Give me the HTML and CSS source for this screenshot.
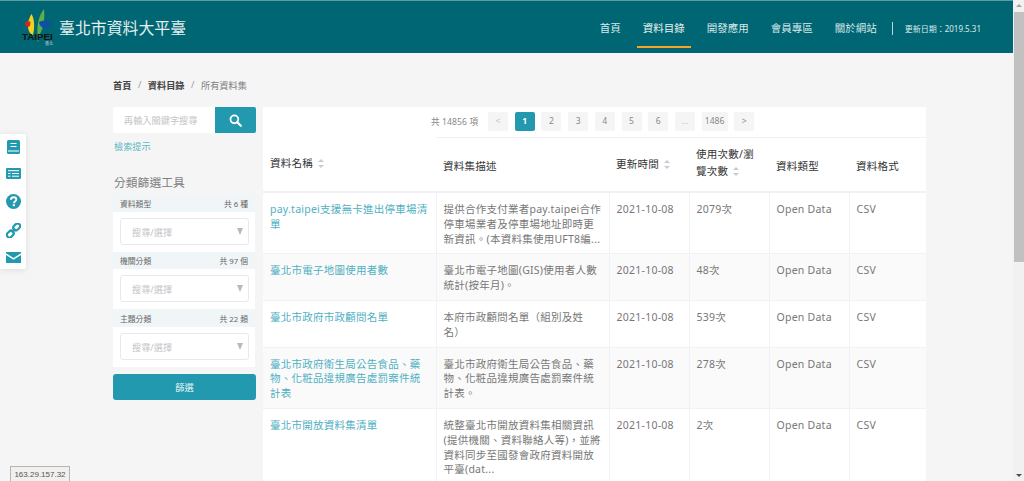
FILE: index.html
```html
<!DOCTYPE html>
<html lang="zh-Hant">
<head>
<meta charset="utf-8">
<title>臺北市資料大平臺</title>
<link rel="stylesheet" href="styles.css">
</head>
<body>
<div class="viewport">
  <div class="page">
    <header class="topbar">
      <div class="brand">
        <div class="logo">
          <svg class="logo-art" viewBox="0 0 34 40" width="34" height="40">
            <path d="M11.5 7 C14.5 12 15 20 13 28 C9.5 27 7.5 22 8 17 C8.3 13 10 9.5 11.5 7Z" fill="#f2d21a"/>
            <path d="M24 2 C25 10 24 20 20 27 C19 30 18.6 33 18 36 C17.6 33 17.6 29 17.4 25 C17 15 20 7 24 2Z" fill="#5bb04a"/>
            <path d="M5 16 C5.5 14 7 13.5 8 15 L10 14 C11 17 10 20 8 20 C6 20 4.8 18 5 16Z" fill="#d5232a"/>
            <path d="M19 15 C23 13 29 13.5 31 16 C31.5 19 28 21.5 24 21 C21.5 20.8 19.5 18.5 19 15Z" fill="#0f4fa8"/>
          </svg>
          <span class="logo-word">TAIPEI</span>
          <span class="logo-sub">臺北</span>
        </div>
        <div class="site-name">臺北市資料大平臺</div>
      </div>
      <nav class="nav">
        <a class="nav-item">首頁</a>
        <a class="nav-item active">資料目錄</a>
        <a class="nav-item">開發應用</a>
        <a class="nav-item">會員專區</a>
        <a class="nav-item">關於網站</a>
        <span class="update">更新日期：2019.5.31</span>
      </nav>
    </header>

    <main class="content">
      <div class="crumbs">
        <a class="crumb">首頁</a><span class="sep">/</span><a class="crumb">資料目錄</a><span class="sep">/</span><span class="crumb-now">所有資料集</span>
      </div>
      <div class="columns">
        <aside class="sidebar">
          <div class="search">
            <div class="search-input">再輸入關鍵字搜尋</div>
            <button class="search-btn" type="button" aria-label="搜尋">
              <svg viewBox="0 0 16 16" width="13" height="13"><circle cx="6.6" cy="6.6" r="4.8" fill="none" stroke="#fff" stroke-width="2.2"/><path d="M10.2 10.2 L14.6 14.6" stroke="#fff" stroke-width="2.6" stroke-linecap="round"/></svg>
            </button>
          </div>
          <a class="hint">檢索提示</a>
          <h2 class="filter-title">分類篩選工具</h2>
          <div class="filter-panel">
            <div class="filter-head"><span>資料類型</span><span>共 6 種</span></div>
            <div class="filter-body"><div class="select"><span>搜尋/選擇</span><i class="caret"></i></div></div>
            <div class="filter-head"><span>機關分類</span><span>共 97 個</span></div>
            <div class="filter-body"><div class="select"><span>搜尋/選擇</span><i class="caret"></i></div></div>
            <div class="filter-head"><span>主題分類</span><span>共 22 類</span></div>
            <div class="filter-body"><div class="select"><span>搜尋/選擇</span><i class="caret"></i></div></div>
          </div>
          <button class="filter-btn" type="button">篩選</button>
        </aside>

        <section class="card">
          <div class="pager">
            <span class="pager-total">共 14856 項</span>
            <a class="pg pg-dim">&lt;</a>
            <a class="pg pg-on">1</a>
            <a class="pg">2</a>
            <a class="pg">3</a>
            <a class="pg">4</a>
            <a class="pg">5</a>
            <a class="pg">6</a>
            <a class="pg pg-dim">...</a>
            <a class="pg pg-wide">1486</a>
            <a class="pg">&gt;</a>
          </div>
          <table class="data">
            <colgroup>
              <col class="c1"><col class="c2"><col class="c3"><col class="c4"><col class="c5"><col class="c6">
            </colgroup>
            <thead>
              <tr>
                <th class="raised">資料名稱<i class="sort"></i></th>
                <th>資料集描述</th>
                <th class="raised-sm">更新時間<i class="sort"></i></th>
                <th class="multi">使用次數/瀏覽次數<i class="sort"></i></th>
                <th>資料類型</th>
                <th>資料格式</th>
              </tr>
            </thead>
            <tbody>
              <tr>
                <td><a class="link">pay.taipei支援無卡進出停車場清單</a></td>
                <td>提供合作支付業者pay.taipei合作停車場業者及停車場地址即時更新資訊。(本資料集使用UFT8編...</td>
                <td>2021-10-08</td><td>2079次</td><td>Open Data</td><td>CSV</td>
              </tr>
              <tr>
                <td><a class="link">臺北市電子地圖使用者數</a></td>
                <td>臺北市電子地圖(GIS)使用者人數統計(按年月)。</td>
                <td>2021-10-08</td><td>48次</td><td>Open Data</td><td>CSV</td>
              </tr>
              <tr>
                <td><a class="link">臺北市政府市政顧問名單</a></td>
                <td>本府市政顧問名單（組別及姓名）</td>
                <td>2021-10-08</td><td>539次</td><td>Open Data</td><td>CSV</td>
              </tr>
              <tr>
                <td><a class="link">臺北市政府衛生局公告食品、藥物、化粧品違規廣告處罰案件統計表</a></td>
                <td>臺北市政府衛生局公告食品、藥物、化粧品違規廣告處罰案件統計表。</td>
                <td>2021-10-08</td><td>278次</td><td>Open Data</td><td>CSV</td>
              </tr>
              <tr>
                <td><a class="link">臺北市開放資料集清單</a></td>
                <td>統整臺北市開放資料集相關資訊(提供機關、資料聯絡人等)，並將資料同步至國發會政府資料開放平臺(dat...</td>
                <td>2021-10-08</td><td>2次</td><td>Open Data</td><td>CSV</td>
              </tr>
            </tbody>
          </table>
        </section>
      </div>
    </main>
  </div>

  <div class="scrollbar" aria-hidden="true">
    <div class="scroll-up"></div>
    <div class="scroll-thumb"></div>
    <div class="scroll-track"></div>
    <div class="scroll-down"></div>
  </div>
</div>

<div class="side-tools">
  <svg viewBox="0 0 13 14" width="13" height="14"><rect width="13" height="14" rx="1.6" fill="#2299ae"/><path d="M3.5 3.5 H9.5 M3.5 6.5 H9.5 M1 11 H12" stroke="#fff" stroke-width="1.2"/></svg>
  <svg viewBox="0 0 15 11" width="15" height="11"><rect width="15" height="11" rx="1.2" fill="#2299ae"/><path d="M2 2.7 H13 M6 5.5 H13 M6 8.2 H13 M2 5.5 H4.5 M2 8.2 H4.5" stroke="#fff" stroke-width="1"/></svg>
  <svg viewBox="0 0 16 16" width="15" height="15"><circle cx="8" cy="8" r="8" fill="#2299ae"/><path d="M5.2 6.2 C5.2 4.4 6.5 3.4 8.1 3.4 C9.8 3.4 11 4.4 11 5.9 C11 7.9 8.4 7.9 8.4 9.8" fill="none" stroke="#fff" stroke-width="2"/><rect x="7.2" y="10.9" width="2.3" height="2.1" fill="#fff"/></svg>
  <svg viewBox="0 0 16 16" width="15" height="15"><g fill="none" stroke="#2299ae" stroke-width="2.3"><rect x="7.4" y="1.4" width="8" height="5.6" rx="2.8" transform="rotate(-45 11.4 4.2)"/><rect x="0.6" y="9" width="8" height="5.6" rx="2.8" transform="rotate(-45 4.6 11.8)"/><path d="M6 10 L10 6"/></g></svg>
  <svg viewBox="0 0 15 11" width="15" height="11"><path d="M0 0 H15 V1.2 L7.5 6 L0 1.2Z M0 3 L7.5 7.8 L15 3 V11 H0Z" fill="#2299ae"/></svg>
</div>
<div class="ip-tag">163.29.157.32</div>
</body>
</html>
```

FILE: styles.css
```css
* { box-sizing: border-box; }
html, body { margin: 0; height: 100%; overflow: hidden; }
body {
  background: #f5f5f5;
  font-family: "Noto Sans", "Noto Sans CJK TC", sans-serif;
  font-size: 10.5px;
  color: #777;
}
a { color: inherit; text-decoration: none; }

.viewport { display: flex; height: 481px; }
.page { flex: 1; min-width: 0; overflow: hidden; }

/* scrollbar */
.scrollbar { width: 11px; background: #f1f1f1; flex: none; padding-left: 1px; display: flex; flex-direction: column; }
.scroll-up { height: 12px; position: relative; flex: none; }
.scroll-up::after {
  content: ""; position: absolute; left: 2px; top: 4px;
  border: 3px solid transparent; border-top: 0; border-bottom: 3px solid #a3a3a3;
}
.scroll-thumb { height: 250px; background: #c1c1c1; flex: none; }
.scroll-track { flex: 1; }
.scroll-down { height: 12px; position: relative; flex: none; }
.scroll-down::after {
  content: ""; position: absolute; left: 2px; top: 5px;
  border: 3px solid transparent; border-bottom: 0; border-top: 3px solid #505050;
}

/* header */
.topbar {
  height: 53px;
  background: #006673;
  border-top: 1px solid #5f9aa2;
  display: flex;
  align-items: stretch;
  justify-content: space-between;
  padding: 0 32px 0 20px;
}
.brand { display: flex; align-items: flex-start; gap: 5px; }
.logo { width: 34px; height: 40px; position: relative; margin-top: 6px; }
.logo-art { display: block; }
.logo-word {
  position: absolute; left: 2px; top: 25px;
  font: bold 9.8px/9px "Liberation Sans", sans-serif;
  color: #111;
}
.logo-sub { position: absolute; left: 25px; top: 34px; font-size: 4px; line-height: 5px; color: #bcd; }
.site-name { font-size: 15.9px; line-height: 20px; color: #e4efef; margin-top: 17px; }

.nav { display: flex; align-items: flex-start; }
.nav-item {
  display: flex; align-items: center;
  padding: 8px 6px 0; margin-right: 10px;
  height: 47px;
  border-bottom: 2px solid transparent;
  font-size: 10.5px; color: #d8e8e9;
}
.nav-item.active { color: #e9f2f2; border-bottom-color: #f5a623; }
.update {
  display: flex; align-items: center;
  height: 13px; margin: 21px 0 0 -1px; padding-left: 12px;
  border-left: 1px solid #b9d5d8;
  font-size: 8px; color: #dcebec;
}

/* content */
.content { padding: 0 87px 0 113px; }
.crumbs { display: flex; align-items: center; height: 54px; padding-top: 9px; font-size: 9.2px; }
.crumb { color: #444; font-weight: 700; }
.crumb-now { color: #808080; }
.sep { margin: 0 6.5px; color: #999; }

.columns { display: flex; gap: 7px; align-items: flex-start; }
.sidebar { width: 143px; flex: none; }

.search { display: flex; height: 26px; border-radius: 2px; overflow: hidden; background: #fff; }
.search-input { flex: 1; padding-left: 11px; line-height: 27px; font-size: 9.2px; color: #c4c4c4; }
.search-btn {
  width: 41px; border: 0; padding: 0; background: #2299ae;
  display: flex; align-items: center; justify-content: center;
}
.hint { display: block; margin: 7px 0 0 1px; font-size: 9.2px; line-height: 14px; color: #5cb6c6; }
.filter-title { margin: 19px 0 0 1px; font-weight: 400; font-size: 11.8px; line-height: 18px; color: #808080; }

.filter-panel { width: 142px; margin-top: 4px; background: #fff; }
.filter-head {
  display: flex; justify-content: space-between; align-items: center;
  height: 17px; padding: 0 7px;
  background: #f0f6f8; font-size: 7.8px; color: #666;
}
.filter-head:nth-child(5) { height: 18px; }
.filter-body { padding: 6px 6px 7px 7px; }
.select {
  height: 27px; border: 1px solid #e8e8ee; border-radius: 3px; background: #fff;
  display: flex; align-items: center; justify-content: space-between;
  padding: 0 5px 0 11px; font-size: 9.2px; color: #c4c4c8;
}
.caret { width: 0; height: 0; border: 3.5px solid transparent; border-top: 7px solid #b4bac4; border-bottom: 0; }
.filter-btn {
  display: block; width: 143px; height: 26px; margin-top: 7px;
  border: 0; border-radius: 3px; background: #2299ae;
  font-family: inherit; font-size: 9.2px; color: #e8f6f8;
}

/* table card */
.card { width: 663px; flex: none; background: #fff; }
.pager {
  position: relative; height: 31px;
  display: flex; align-items: center; gap: 7px;
  padding: 0 0 3px 168px;
  font-size: 8.6px; color: #888;
}
.pager::after {
  content: ""; position: absolute; left: 173px; right: 0; bottom: 0;
  height: 1px; background: #f0f0f5;
}
.pager-total { width: 48px; margin-right: 2px; letter-spacing: .1px; }
.pg {
  min-width: 20px; height: 19px; padding: 0 3px;
  display: flex; align-items: center; justify-content: center;
  background: #f5f5f5; border-radius: 2px; color: #888;
  margin-right: -.3px;
}
.pg-on { background: #2299ae; color: #fff; font-weight: 700; }
.pg-dim { color: #c4c4c4; }
.pg-wide { min-width: 26px; }

.data { width: 663px; table-layout: fixed; border-collapse: collapse; letter-spacing: .25px; text-spacing-trim: space-all; }
.c1 { width: 173px; } .c2 { width: 173px; } .c3 { width: 80px; }
.c4 { width: 80px; } .c5 { width: 80px; } .c6 { width: 77px; }
.data th {
  height: 54px; padding: 4px 7px 0; text-align: left; vertical-align: middle;
  font-weight: 400; color: #333; line-height: 17px;
  border-bottom: 2px solid #f0f0f5; font-size: 10.5px;
}
.data th.raised { padding-bottom: 6px; }
.data th.raised-sm { padding-bottom: 4px; }
.data th.multi { padding-top: 0; padding-bottom: 4px; }
.data td {
  padding: 9px 7px 7px; vertical-align: top; line-height: 14.8px;
  border-left: 1px solid #f2f2f6; border-bottom: 1px solid #f2f2f6;
  color: #777; word-break: break-all;
}
.data td:first-child { border-left: 0; }
.data tbody tr:nth-child(even) td { background: #fafafa; }
.link { color: #4fb0c2; }
.sort {
  display: inline-block; position: relative; width: 6px; height: 9px;
  margin-left: 5px; vertical-align: -1px;
}
.sort::before, .sort::after {
  content: ""; position: absolute; left: 0; width: 0; height: 0;
  border-left: 3px solid transparent; border-right: 3px solid transparent;
}
.sort::before { top: 0; border-bottom: 3.5px solid #c8ccd2; }
.sort::after { bottom: 0; border-top: 3.5px solid #c8ccd2; }

/* floating */
.side-tools {
  position: fixed; left: 0; top: 134px; width: 26px; height: 135px;
  background: #fff; border-radius: 0 2px 2px 0;
  box-shadow: 0 1px 6px rgba(0,0,0,.1);
  display: flex; flex-direction: column; align-items: center; justify-content: space-between;
  padding: 6px 0 6px 1px;
}
.ip-tag {
  position: fixed; left: 10px; top: 466px; width: 60px; height: 17px;
  background: #f2f0ee; border: 1px solid #b5b5b5;
  font: 8px/15px "Liberation Sans", sans-serif; color: #555; text-align: center;
}
```
